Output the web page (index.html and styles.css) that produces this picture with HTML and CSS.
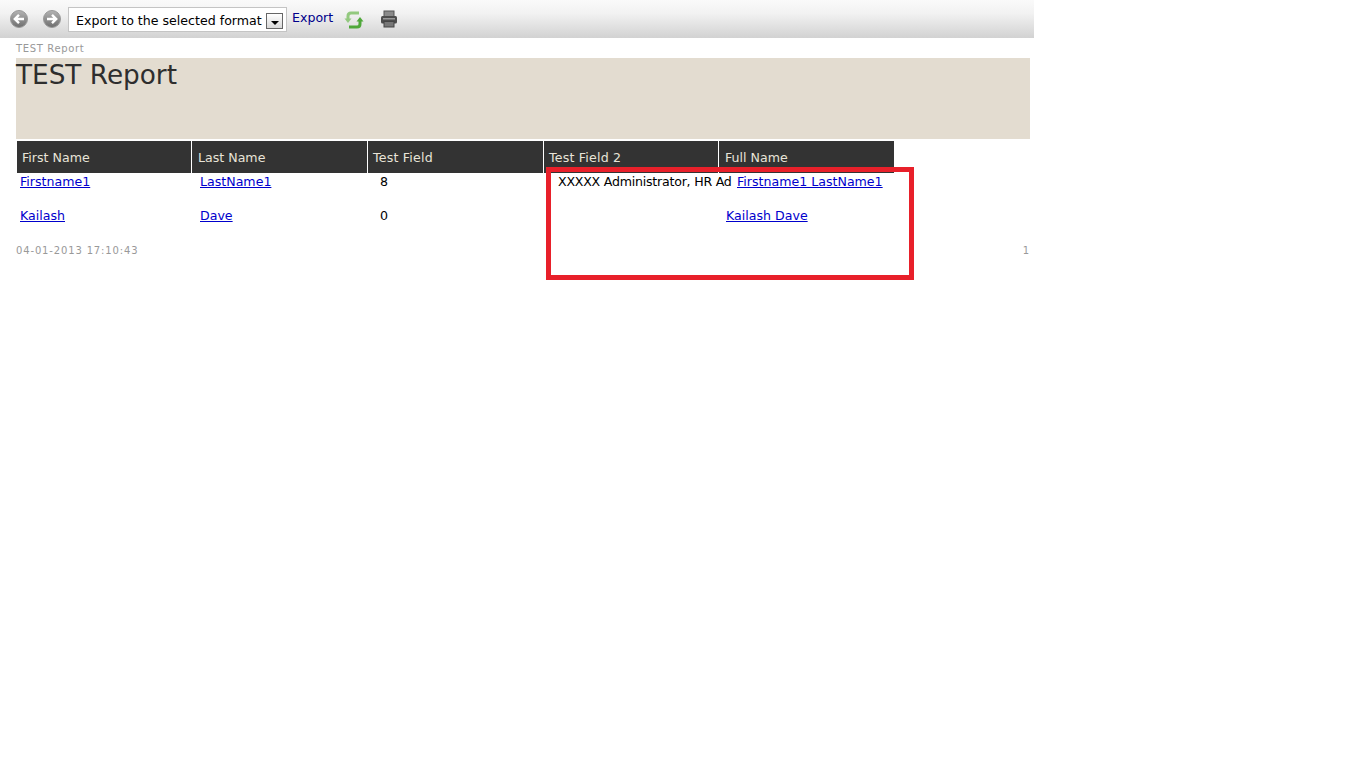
FILE: index.html
```html
<!DOCTYPE html>
<html lang="en">
<head>
    <meta charset="UTF-8">
    <meta name="viewport" content="width=device-width, initial-scale=1.0">
    <title>TEST Report</title>
    <link rel="stylesheet" href="styles.css">
</head>
<body>
    <div class="toolbar">
        <svg class="nav-icon first" width="20" height="20" viewBox="0 0 20 20">
            <defs>
                <linearGradient id="navGrad" x1="0" y1="0" x2="0" y2="1">
                    <stop offset="0" stop-color="#b4b4b4"/>
                    <stop offset="1" stop-color="#6e6e6e"/>
                </linearGradient>
            </defs>
            <circle cx="10" cy="10" r="8.5" fill="url(#navGrad)" stroke="#9a9a9a"/>
            <path d="M15 10H6M10 5.8 5.8 10l4.2 4.2" fill="none" stroke="#fff" stroke-width="2.4"/>
        </svg>
        <svg class="nav-icon" width="20" height="20" viewBox="0 0 20 20">
            <circle cx="10" cy="10" r="8.5" fill="url(#navGrad)" stroke="#9a9a9a"/>
            <path d="M5 10h9M10 5.8l4.2 4.2-4.2 4.2" fill="none" stroke="#fff" stroke-width="2.4"/>
        </svg>
        <div class="format-select">
            <span>Export to the selected format</span>
            <span class="select-btn"><i class="select-arrow"></i></span>
        </div>
        <a class="export-link" href="#">Export</a>
        <svg class="refresh-icon" width="20" height="20" viewBox="0 0 20 20">
            <path d="M4 9V6Q4 3 7 3H15" fill="none" stroke="#93c97f" stroke-width="3"/>
            <path d="M.5 8.500H7.500L4 13Z" fill="#93c97f"/>
            <path d="M16 11V14Q16 17 13 17H5" fill="none" stroke="#4fa83a" stroke-width="3"/>
            <path d="M12.500 11.500H19.500L16 7Z" fill="#4fa83a"/>
        </svg>
        <svg class="print-icon" width="18" height="18" viewBox="0 0 18 18">
            <rect x="4" y="1" width="10" height="6" fill="#8a8a8a" stroke="#555"/>
            <rect x="1" y="6" width="16" height="7.500" rx="1.500" fill="#4d4d4d"/>
            <rect x="3" y="8" width="12" height="1.500" fill="#9a9a9a"/>
            <rect x="4" y="11.500" width="10" height="5.500" fill="#777" stroke="#444"/>
        </svg>
    </div>

    <div class="report">
        <div class="report-label">TEST Report</div>
        <div class="report-banner">
            <h1>TEST Report</h1>
        </div>

        <div class="col-headers">
            <div class="col-header">First Name</div>
            <div class="col-header">Last Name</div>
            <div class="col-header">Test Field</div>
            <div class="col-header">Test Field 2</div>
            <div class="col-header">Full Name</div>
        </div>

        <div class="row row-first">
            <div class="cell"><a href="#">Firstname1</a></div>
            <div class="cell"><a href="#">LastName1</a></div>
            <div class="cell">8</div>
            <div class="cell cell-tight">XXXXX Administrator, HR Ad</div>
            <div class="cell"><a href="#">Firstname1 LastName1</a></div>
        </div>
        <div class="row row-second">
            <div class="cell"><a href="#">Kailash</a></div>
            <div class="cell"><a href="#">Dave</a></div>
            <div class="cell">0</div>
            <div class="cell"></div>
            <div class="cell"><a href="#">Kailash Dave</a></div>
        </div>

        <div class="report-footer">
            <span>04-01-2013 17:10:43</span>
            <span>1</span>
        </div>
    </div>

    <!-- red annotation drawn over the table -->
    <div class="highlight-box"></div>
</body>
</html>
```

FILE: styles.css
```css
body {
    margin: 0;
    background: #fff;
    font-family: "DejaVu Sans", Verdana, sans-serif;
    font-size: 12.6px;
    color: #000;
}
.toolbar {
    width: 1034px;
    height: 38px;
    box-sizing: border-box;
    display: flex;
    align-items: flex-start;
    background: linear-gradient(#fafafa, #f2f2f2 35%, #d2d2d2);
}
.nav-icon {
    margin-top: 9px;
    margin-right: 13px;
}
.nav-icon.first {
    margin-left: 9px;
}
.nav-icon + .format-select {
    margin-left: -7px;
}
.format-select {
    width: 219px;
    height: 25px;
    margin-top: 7px;
    box-sizing: border-box;
    padding-left: 7px;
    padding-top: 1px;
    display: flex;
    align-items: center;
    justify-content: space-between;
    background: #fff;
    border: 1px solid #c4c4c4;
    white-space: nowrap;
}
.select-btn {
    width: 17px;
    height: 16px;
    margin-right: 3px;
    margin-top: 2px;
    box-sizing: border-box;
    display: flex;
    align-items: center;
    justify-content: center;
    background: linear-gradient(#fff, #d8d8d8);
    border: 1px solid #666;
}
.select-arrow {
    width: 0;
    height: 0;
    margin-top: 3px;
    border-left: 4px solid transparent;
    border-right: 4px solid transparent;
    border-top: 4px solid #000;
}
.export-link {
    margin-left: 5px;
    margin-top: 10px;
    color: #00008b;
    text-decoration: none;
}
.refresh-icon {
    margin-left: 11px;
    margin-top: 10px;
}
.print-icon {
    margin-left: 16px;
    margin-top: 10px;
}
.report {
    width: 1014px;
    margin-left: 16px;
}
.report-label {
    height: 20px;
    line-height: 21px;
    font-size: 10px;
    letter-spacing: .65px;
    color: #999;
}
.report-banner {
    height: 81px;
    background: #e3dcd0;
}
.report-banner h1 {
    margin: 0;
    font-size: 26.3px;
    font-weight: normal;
    line-height: 34px;
    color: #2e2e2e;
}
.col-headers {
    display: flex;
    gap: 1px;
    margin-top: 2px;
    margin-left: 1px;
}
.col-header {
    width: 174px;
    height: 32px;
    box-sizing: border-box;
    padding: 9px 0 0 5px;
    line-height: 16px;
    background: #333;
    color: #e8e4d8;
}
.col-header:nth-child(2),
.col-header:nth-child(3),
.col-header:nth-child(5) {
    width: 175px;
}
.col-header:nth-child(2),
.col-header:nth-child(5) {
    padding-left: 6px;
}
.col-header:nth-child(3),
.col-header:nth-child(4) {
    letter-spacing: .2px;
}
.row {
    display: grid;
    height: 34px;
    box-sizing: border-box;
    padding: 1px 0 0 4px;
    line-height: 16px;
}
.row-first {
    grid-template-columns: 180px 180px 178px 179px auto;
}
.row-second {
    grid-template-columns: 180px 180px 178px 168px auto;
}
.cell {
    white-space: nowrap;
}
.cell-tight {
    letter-spacing: -.23px;
}
.cell a {
    color: #0000cc;
}
.report-footer {
    display: flex;
    justify-content: space-between;
    margin-top: 3px;
    font-size: 10px;
    line-height: 14px;
    letter-spacing: .85px;
    color: #999;
}
.highlight-box {
    position: absolute;
    left: 546px;
    top: 167px;
    width: 368px;
    height: 113px;
    box-sizing: border-box;
    border: 5px solid #e8202a;
}
```
